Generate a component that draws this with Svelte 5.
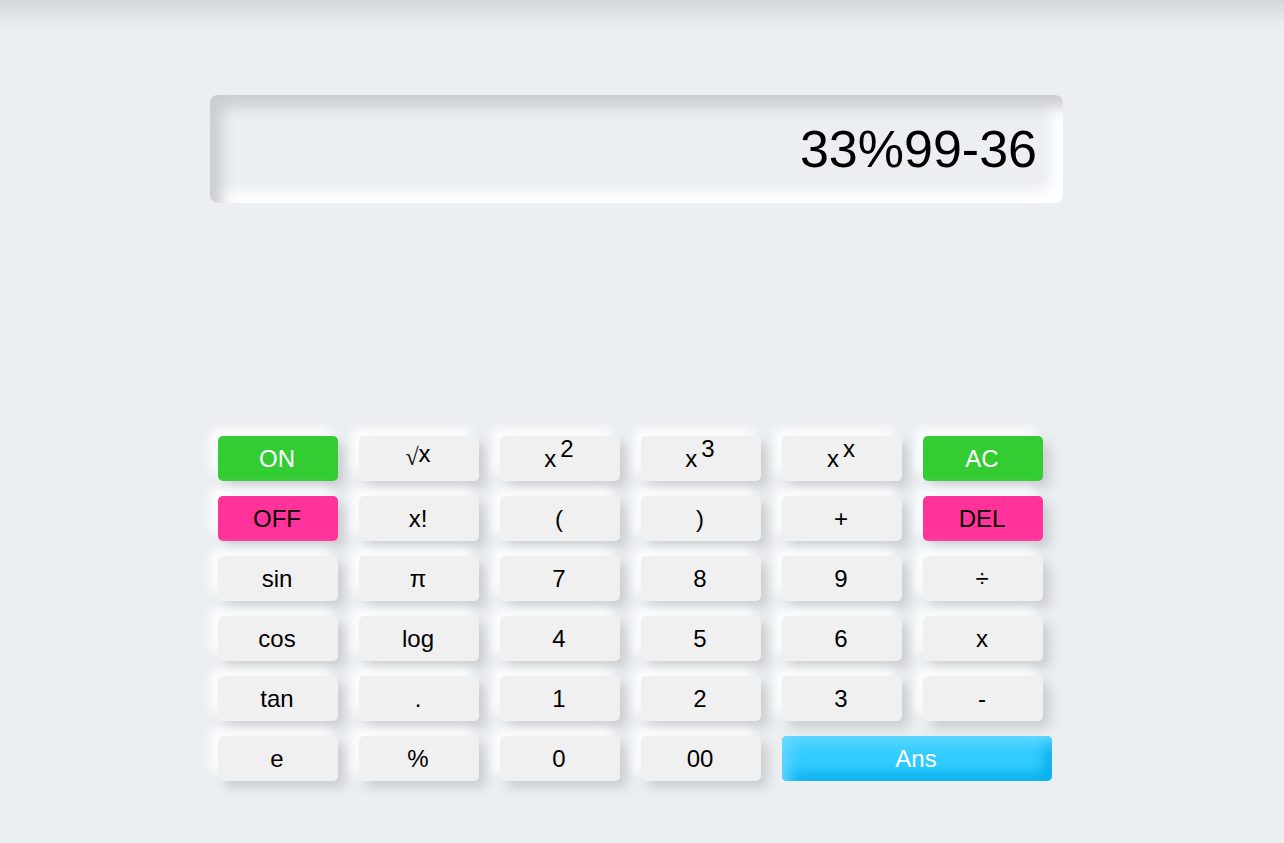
<script>
  const keys = [
    { text: 'ON', kind: 'green' },
    { text: '√', radicand: 'x' },
    { text: 'x', power: '2' },
    { text: 'x', power: '3' },
    { text: 'x', power: 'x' },
    { text: 'AC', kind: 'green' },
    { text: 'OFF', kind: 'pink' },
    { text: 'x!' },
    { text: '(' },
    { text: ')' },
    { text: '+' },
    { text: 'DEL', kind: 'pink' },
    { text: 'sin' },
    { text: 'π' },
    { text: '7' },
    { text: '8' },
    { text: '9' },
    { text: '÷' },
    { text: 'cos' },
    { text: 'log' },
    { text: '4' },
    { text: '5' },
    { text: '6' },
    { text: 'x' },
    { text: 'tan' },
    { text: '.' },
    { text: '1' },
    { text: '2' },
    { text: '3' },
    { text: '-' },
    { text: 'e' },
    { text: '%' },
    { text: '0' },
    { text: '00' },
    { text: 'Ans', kind: 'answer' },
  ];

  let expression = $state('33%99-36');

  function press(key) {
    if (key.text === 'AC' || key.text === 'OFF') expression = '';
    else if (key.text === 'DEL') expression = expression.slice(0, -1);
    else if (/^([0-9]+|[-+%().÷x])$/.test(key.text) && !key.power) expression += key.text;
  }
</script>

<main>
  <div class="calculator">
    <input class="display" type="text" aria-label="Expression" bind:value={expression} />
    <div class="keypad">
      {#each keys as key}
        <button type="button" class={['key', key.kind]} onclick={() => press(key)}>
          {#if key.radicand}
            <span class="radical">{key.text}</span><span class="radicand">{key.radicand}</span>
          {:else if key.power}
            {key.text}<sup>{key.power}</sup>
          {:else}
            {key.text}
          {/if}
        </button>
      {/each}
    </div>
  </div>
</main>

<style>
  :global(body) {
    margin: 0;
    background: #ebeff2;
  }

  main {
    box-sizing: border-box;
    min-height: 100vh;
    padding: 95px 35px 62px 24px;
    font-family: Arial, 'Liberation Sans', sans-serif;
    color: #000;
    background: linear-gradient(#d3d7da, #dde1e4 12px, #e7ebee 24px, #ebeff2 36px);
  }

  .calculator {
    max-width: 853px;
    margin: 0 auto;
  }

  .display {
    display: block;
    box-sizing: border-box;
    width: 100%;
    height: 108px;
    padding: 0 26px;
    border: 0;
    border-radius: 8px;
    outline: 0;
    background: transparent;
    box-shadow:
      inset 12px 12px 14px #cbced1,
      inset -12px -12px 14px #fff;
    color: inherit;
    font: 52px Arial, 'Liberation Sans', sans-serif;
    text-align: right;
  }

  .keypad {
    display: grid;
    grid-template-columns: repeat(6, 1fr);
    gap: 15px 21px;
    margin: 233px 20px 0 8px;
  }

  .key {
    height: 45px;
    padding: 0 2px 0 0;
    border: 0;
    border-radius: 5px;
    background: #f0f0f0;
    box-shadow:
      7px 7px 12px #cbced1,
      -7px -7px 12px #fff;
    color: inherit;
    font: 24px Arial, 'Liberation Sans', sans-serif;
    cursor: pointer;
  }

  .green {
    background: #3c3;
    color: #fff;
  }

  .pink {
    background: #f39;
  }

  .answer {
    grid-column: span 2;
    margin-right: -9px;
    background: #3cf;
    box-shadow:
      inset 7px 7px 14px #66d9ff,
      inset -7px -7px 14px #00aaea;
    color: #fff;
  }

  sup {
    margin-left: 4px;
    font-size: 24px;
    line-height: 0;
    vertical-align: 10px;
  }

  .radical {
    font-family: 'Liberation Serif', serif;
    line-height: 0;
    vertical-align: 2px;
  }

  .radicand {
    line-height: 0;
    vertical-align: 5px;
  }
</style>
